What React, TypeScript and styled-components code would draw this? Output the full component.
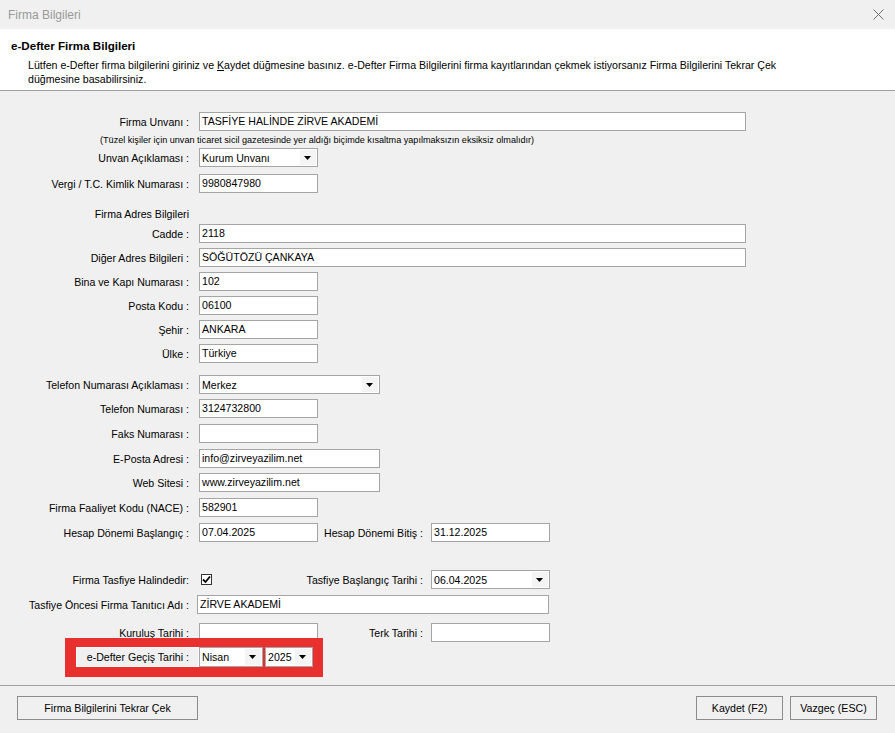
import styled, { createGlobalStyle } from 'styled-components'

// --------------------------------------------------------------------------------------------------------------
const GlobalStyle = createGlobalStyle`
  html, body {
    margin: 0;
    padding: 0;
    background: #f0f0f0;
  }
  * {
    box-sizing: border-box;
  }
`

const Window = styled.div`
  width: 895px;
  height: 733px;
  display: flex;
  flex-direction: column;
  background: #f0f0f0;
  font-family: "Liberation Sans", Arial, sans-serif;
  font-size: 10.6px;
  color: #000;
  overflow: hidden;
`

const TitleBar = styled.div`
  height: 29px;
  display: flex;
  align-items: center;
  justify-content: space-between;
  padding: 0 9px 0 8px;
  background: #f0f0f0;
  color: #999;
  font-size: 12px;
  flex-shrink: 0;
`

const CloseButton = styled.div`
  width: 16px;
  height: 16px;
  display: flex;
  align-items: center;
  justify-content: center;
`

const Header = styled.div`
  height: 62px;
  background: #fff;
  border-bottom: 1px solid #a0a0a0;
  padding: 10px 11px 0 11px;
  flex-shrink: 0;
`

const HeaderTitle = styled.div`
  font-weight: 700;
  font-size: 11.6px;
  line-height: 14px;
  margin-bottom: 5px;
`

const Description = styled.div`
  padding-left: 17px;
  line-height: 14px;
`

const Underline = styled.span`
  text-decoration: underline;
`

const Form = styled.div`
  flex: 1;
  display: flex;
  flex-direction: column;
`

const Row = styled.div<{ $mt: number }>`
  display: flex;
  align-items: center;
  height: 19px;
  margin-top: ${p => p.$mt}px;
`

const Label = styled.div<{ $pad?: number }>`
  width: 189px;
  flex-shrink: 0;
  display: flex;
  justify-content: flex-end;
  margin-right: ${p => 10 - (p.$pad ?? 0)}px;
  white-space: nowrap;
`

const SubLabel = styled.div`
  width: 105px;
  flex-shrink: 0;
  display: flex;
  justify-content: flex-end;
  margin-right: 8px;
  white-space: nowrap;
`

const TextBox = styled.div<{ $w: number }>`
  width: ${p => p.$w}px;
  height: 19px;
  flex-shrink: 0;
  background: #fff;
  border: 1px solid #a5a5a5;
  padding-left: 2px;
  line-height: 17px;
  white-space: nowrap;
  overflow: hidden;
`

const SelectBox = styled.div<{ $w: number; $h?: number }>`
  width: ${p => p.$w}px;
  height: ${p => p.$h ?? 19}px;
  flex-shrink: 0;
  background: #fff;
  border: 1px solid #a5a5a5;
  display: flex;
  align-items: stretch;
`

const SelectValue = styled.div`
  flex: 1;
  padding-left: 2px;
  display: flex;
  align-items: center;
  white-space: nowrap;
  overflow: hidden;
`

const SelectArrow = styled.div`
  width: 16px;
  margin: 1px;
  background: #f4f4f4;
  display: flex;
  align-items: center;
  justify-content: center;
`

const Note = styled.div`
  height: 12px;
  margin-top: 3px;
  padding-left: 100px;
  font-size: 9.1px;
  line-height: 12px;
  white-space: nowrap;
`

const CheckBox = styled.div`
  width: 11px;
  height: 11px;
  margin-left: 1px;
  border: 1px solid #333;
  background: #fff;
  display: flex;
  align-items: center;
  justify-content: center;
  flex-shrink: 0;
`

const Spacer = styled.div<{ $w: number }>`
  width: ${p => p.$w}px;
  flex-shrink: 0;
`

const Highlight = styled.div`
  align-self: flex-start;
  margin: -4px 0 0 65px;
  padding: 9px 10px 10px 11px;
  background: #e8302f;
  display: flex;
  align-items: center;
`

const HighlightLabel = styled.div`
  width: 123px;
  height: 20px;
  background: #f0f0f0;
  border: 1px solid #fafafa;
  text-align: right;
  padding-right: 9px;
  line-height: 18px;
  white-space: nowrap;
`

const Footer = styled.div`
  height: 48px;
  flex-shrink: 0;
  border-top: 1px solid #a0a0a0;
  display: flex;
  align-items: center;
  padding: 0 18px 4px 17px;
  gap: 7px;
`

const Button = styled.button<{ $w: number }>`
  width: ${p => p.$w}px;
  height: 24px;
  background: #f0f0f0;
  border: 1px solid #8c8c8c;
  font-family: "Liberation Sans", Arial, sans-serif;
  font-size: 10.6px;
  color: #000;
  padding: 0;
  cursor: pointer;
`

const Grow = styled.div`
  flex: 1;
`

// --------------------------------------------------------------------------------------------------------------

const Arrow = () => (
  <svg width="8" height="4" viewBox="0 0 8 4">
    <path d="M0 0 H7 L3.5 4 Z" fill="#000" />
  </svg>
)

const Select = ({ w, value, h }: { w: number; value: string; h?: number }) => (
  <SelectBox $w={w} $h={h}>
    <SelectValue>{value}</SelectValue>
    <SelectArrow>
      <Arrow />
    </SelectArrow>
  </SelectBox>
)

export default function App() {
  return (
    <Window>
      <GlobalStyle />
      <TitleBar>
        <span>Firma Bilgileri</span>
        <CloseButton>
          <svg width="11" height="11" viewBox="0 0 11 11">
            <path d="M0.5 0.5 L10.5 10.5 M10.5 0.5 L0.5 10.5" stroke="#6f6f6f" strokeWidth="1" />
          </svg>
        </CloseButton>
      </TitleBar>

      <Header>
        <HeaderTitle>e-Defter Firma Bilgileri</HeaderTitle>
        <Description>
          Lütfen e-Defter firma bilgilerini giriniz ve <Underline>K</Underline>aydet düğmesine basınız. e-Defter Firma
          Bilgilerini firma kayıtlarından çekmek istiyorsanız Firma Bilgilerini Tekrar Çek
          <br />
          düğmesine basabilirsiniz.
        </Description>
      </Header>

      <Form>
        <Row $mt={21}>
          <Label>Firma Unvanı :</Label>
          <TextBox $w={547}>TASFİYE HALİNDE ZİRVE AKADEMİ</TextBox>
        </Row>
        <Note>(Tüzel kişiler için unvan ticaret sicil gazetesinde yer aldığı biçimde kısaltma yapılmaksızın eksiksiz olmalıdır)</Note>
        <Row $mt={2}>
          <Label>Unvan Açıklaması :</Label>
          <Select w={119} value="Kurum Unvanı" />
        </Row>
        <Row $mt={7}>
          <Label>Vergi / T.C. Kimlik Numarası :</Label>
          <TextBox $w={119}>9980847980</TextBox>
        </Row>

        <Row $mt={11}>
          <Label>Firma Adres Bilgileri</Label>
        </Row>
        <Row $mt={1}>
          <Label>Cadde :</Label>
          <TextBox $w={547}>2118</TextBox>
        </Row>
        <Row $mt={5}>
          <Label>Diğer Adres Bilgileri :</Label>
          <TextBox $w={547}>SÖĞÜTÖZÜ ÇANKAYA</TextBox>
        </Row>
        <Row $mt={5}>
          <Label>Bina ve Kapı Numarası :</Label>
          <TextBox $w={119}>102</TextBox>
        </Row>
        <Row $mt={5}>
          <Label>Posta Kodu :</Label>
          <TextBox $w={119}>06100</TextBox>
        </Row>
        <Row $mt={5}>
          <Label>Şehir :</Label>
          <TextBox $w={119}>ANKARA</TextBox>
        </Row>
        <Row $mt={5}>
          <Label>Ülke :</Label>
          <TextBox $w={119}>Türkiye</TextBox>
        </Row>

        <Row $mt={12}>
          <Label>Telefon Numarası Açıklaması :</Label>
          <Select w={181} value="Merkez" />
        </Row>
        <Row $mt={5}>
          <Label>Telefon Numarası :</Label>
          <TextBox $w={119}>3124732800</TextBox>
        </Row>
        <Row $mt={6}>
          <Label>Faks Numarası :</Label>
          <TextBox $w={119} />
        </Row>
        <Row $mt={6}>
          <Label>E-Posta Adresi :</Label>
          <TextBox $w={181}>info@zirveyazilim.net</TextBox>
        </Row>
        <Row $mt={5}>
          <Label>Web Sitesi :</Label>
          <TextBox $w={181}>www.zirveyazilim.net</TextBox>
        </Row>
        <Row $mt={6}>
          <Label>Firma Faaliyet Kodu (NACE) :</Label>
          <TextBox $w={119}>582901</TextBox>
        </Row>
        <Row $mt={6}>
          <Label>Hesap Dönemi Başlangıç :</Label>
          <TextBox $w={119}>07.04.2025</TextBox>
          <SubLabel>Hesap Dönemi Bitiş :</SubLabel>
          <TextBox $w={119}>31.12.2025</TextBox>
        </Row>

        <Row $mt={28}>
          <Label $pad={-1}>Firma Tasfiye Halindedir:</Label>
          <CheckBox>
            <svg width="9" height="9" viewBox="0 0 9 9">
              <path d="M1 4.5 L3.5 7 L8 1.5" stroke="#000" strokeWidth="1.8" fill="none" />
            </svg>
          </CheckBox>
          <Spacer $w={106} />
          <SubLabel>Tasfiye Başlangıç Tarihi :</SubLabel>
          <Select w={119} value="06.04.2025" />
        </Row>
        <Row $mt={6}>
          <Label $pad={2}>Tasfiye Öncesi Firma Tanıtıcı Adı :</Label>
          <TextBox $w={352}>ZİRVE AKADEMİ</TextBox>
        </Row>
        <Row $mt={9}>
          <Label>Kuruluş Tarihi :</Label>
          <TextBox $w={119} />
          <SubLabel>Terk Tarihi :</SubLabel>
          <TextBox $w={119} />
        </Row>

        <Highlight>
          <HighlightLabel>e-Defter Geçiş Tarihi :</HighlightLabel>
          <Select w={64} h={20} value="Nisan" />
          <Spacer $w={2} />
          <Select w={48} h={20} value="2025" />
        </Highlight>
      </Form>

      <Footer>
        <Button $w={181}>Firma Bilgilerini Tekrar Çek</Button>
        <Grow />
        <Button $w={87}>Kaydet (F2)</Button>
        <Button $w={87}>Vazgeç (ESC)</Button>
      </Footer>
    </Window>
  )
}
